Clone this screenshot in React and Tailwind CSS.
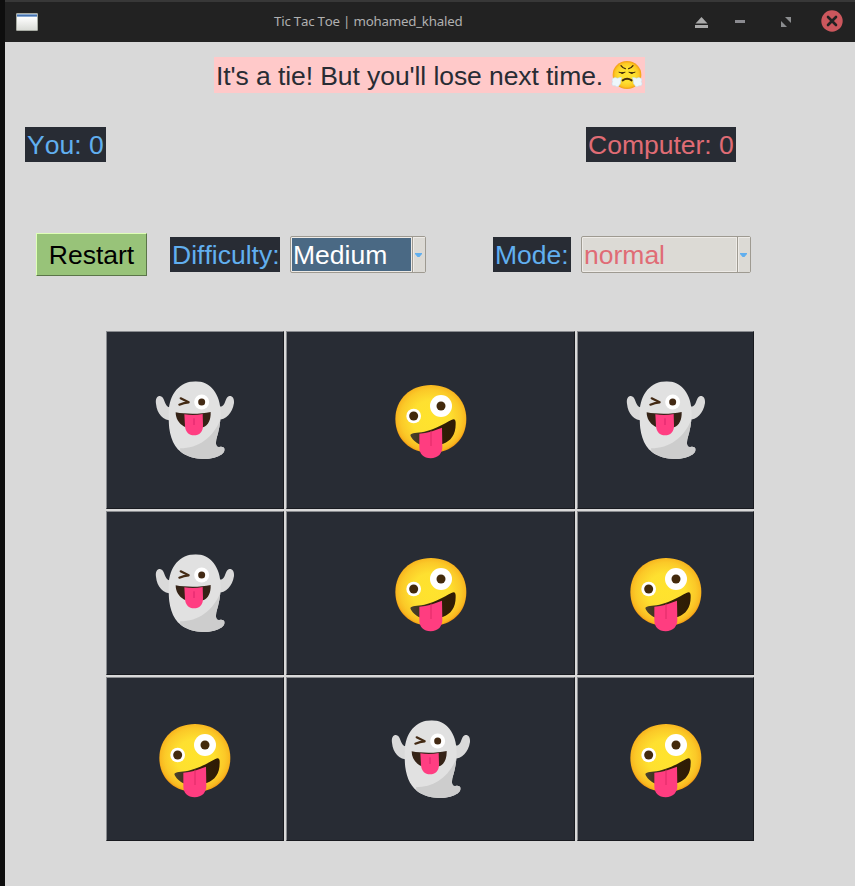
import React from "react";

function Ghost() {
  return (
    <svg width="100" height="100" viewBox="0 0 300 300" className="block shrink-0" role="img" aria-label="ghost">
      <defs>
        <clipPath id="ghostBody">
          <path d="M152 34 C104 34 73 72 71 126 C69 180 78 222 108 246 C135 267 175 271 207 263 C226 258 238 249 239 239 C239 231 231 229 223 231 C212 232 212 222 214 208 C222 182 227 158 227 130 C227 72 196 34 152 34 Z" />
        </clipPath>
      </defs>
      <path d="M82 152 C54 151 36 132 33 101 C31 86 36 78 45 78 C56 80 57 92 62 102 C66 112 74 114 84 108 Z" fill="#dadada" />
      <path d="M218 150 C243 149 262 130 267 99 C268 85 262 77 253 78 C243 81 242 95 237 103 C232 111 226 111 216 108 Z" fill="#dadada" />
      <g clipPath="url(#ghostBody)">
        <rect x="60" y="25" width="200" height="250" fill="#e1e1e1" />
        <path d="M105 235 C160 234 205 205 230 140 L255 280 L110 280 Z" fill="#cdcdcd" />
      </g>
      <path d="M92 127 C124 133 166 133 197 126 C198 148 190 167 174 172 L118 170 C101 161 92 145 92 127 Z" fill="#352317" />
      <path d="M118 133 C137 136 155 136 173 132 L174 164 C175 186 163 196 147 196 C132 196 121 186 120 168 Z" fill="#ff3e82" />
      <path d="M147 145 V165" stroke="#db236a" strokeWidth="3" />
      <circle cx="170" cy="96" r="22.5" fill="#fff" />
      <circle cx="170" cy="96" r="10.5" fill="#432a14" />
      <path d="M107 85 L131 97 Q117 98 103 104" fill="none" stroke="#432a14" strokeWidth="6.5" strokeLinecap="round" strokeLinejoin="round" />
    </svg>
  );
}

function Zany() {
  return (
    <svg width="100" height="100" viewBox="2 0 300 300" className="block shrink-0" role="img" aria-label="zany face">
      <defs>
        <radialGradient id="zanyFace" cx="50%" cy="49%" r="53%">
          <stop offset="0" stopColor="#ffe32d" />
          <stop offset="0.5" stopColor="#fee030" />
          <stop offset="0.8" stopColor="#fbc928" />
          <stop offset="0.92" stopColor="#f8b820" />
          <stop offset="1" stopColor="#f08a0b" />
        </radialGradient>
        <linearGradient id="zanyMouth" x1="0" x2="1">
          <stop offset="0" stopColor="#4a422f" />
          <stop offset="0.5" stopColor="#302107" />
          <stop offset="1" stopColor="#2f1b05" />
        </linearGradient>
      </defs>
      <path d="M152 45 C213 45 258 87 258 147 C258 208 214 249 152 249 C90 249 45 208 45 147 C45 87 91 45 152 45 Z" fill="url(#zanyFace)" />
      <path d="M90 195 C94 187 109 190 132 185 C169 176 188 163 213 150 C222 145 227 148 226 162 C226 194 212 213 187 222 L121 224 C106 219 93 206 90 195 Z" fill="url(#zanyMouth)" />
      <path d="M117 191 C140 189 163 182 185 173 L186 229 C187 250 173 265 151 265 C130 265 117 252 117 232 Z" fill="#ff3d80" />
      <path d="M152 182 V228" stroke="#de2a67" strokeWidth="3" />
      <circle cx="100" cy="138" r="22" fill="#fff" />
      <circle cx="100" cy="138" r="13.5" fill="#432a0c" />
      <circle cx="182" cy="108" r="33" fill="#fff" />
      <circle cx="182" cy="108" r="13.5" fill="#432a0c" />
    </svg>
  );
}

function Triumph() {
  return (
    <svg width="32" height="30" viewBox="0 0 96 90" className="block shrink-0" role="img" aria-label="face with steam">
      <defs>
        <radialGradient id="triumphFace" cx="50%" cy="50%" r="52%">
          <stop offset="0.5" stopColor="#fee030" />
          <stop offset="0.8" stopColor="#fcc924" />
          <stop offset="1" stopColor="#f2930f" />
        </radialGradient>
      </defs>
      <ellipse cx="48" cy="45" rx="43" ry="42" fill="url(#triumphFace)" />
      <g fill="none" stroke="#422b0d" strokeWidth="4" strokeLinecap="round">
        <path d="M30 17 Q36 25 43 26 M66 17 Q60 25 53 26" />
        <path d="M24 37 Q31 41 42 37 M54 37 Q65 41 72 37" strokeWidth="3" />
        <path d="M35 61 Q48 52 62 61" strokeWidth="6" />
      </g>
      <path d="M27 37 H41 Q34 47 27 37 M55 37 H69 Q62 47 55 37" fill="#422b0d" />
      <g fill="#edf7fc" stroke="#bddced" strokeWidth="1.5">
        <path d="M32 53 C25 51 20 57 15 53 C5 51 1 61 5 65 C0 71 4 80 12 77 C18 82 24 80 25 75 C31 72 27 63 32 53 Z" />
        <path d="M64 53 C71 51 76 57 81 53 C91 51 95 61 91 65 C96 71 92 80 84 77 C78 82 72 80 71 75 C65 72 69 63 64 53 Z" />
      </g>
    </svg>
  );
}

function Label({ width, color, children }) {
  return (
    <div className={`h-[35px] shrink-0 bg-[#282c34] px-[2px] text-[26.5px] leading-[36px] whitespace-nowrap ${width} ${color}`}>
      {children}
    </div>
  );
}

function Combo({ value, width, fieldStyle }) {
  return (
    <div className={`flex h-[37px] shrink-0 rounded-[2px] border border-[#9e9a91] bg-[#eeebe7] ${width}`}>
      <div className={`m-px mr-0 flex-1 pl-px text-[26.5px] leading-[35px] ${fieldStyle}`}>{value}</div>
      <div className="ml-px flex w-[13px] items-center justify-center border-l border-[#9e9a91] bg-[#dcdad5] pr-px shadow-[inset_1px_1px_0_#eeebe7]">
        <svg width="7" height="4" viewBox="0 0 7 4" className="block shrink-0">
          <path d="M0 0 H7 V1 L4.5 4 H2.5 L0 1 Z" fill="#61afef" />
        </svg>
      </div>
    </div>
  );
}

const board = ["ghost", "zany", "ghost", "ghost", "zany", "zany", "zany", "ghost", "zany"];

function TitleBar() {
  return (
    <header className="flex h-[42px] items-center border-t-2 border-[#383838] bg-[#222222]">
      <svg width="22" height="18" viewBox="0 0 22 18" className="ml-[11px] block shrink-0">
        <defs>
          <linearGradient id="windowIcon" x1="0" y1="0" x2="0" y2="1">
            <stop offset="0.2" stopColor="#fff" />
            <stop offset="1" stopColor="#d8dad5" />
          </linearGradient>
        </defs>
        <rect x="0.5" y="0.5" width="21" height="17" rx="0.5" fill="url(#windowIcon)" stroke="#a7aba3" />
        <path d="M1 1H21V4H1Z" fill="#86a8d2" />
        <path d="M1 2.5H21" stroke="#4671ad" />
      </svg>
      <div className="-mt-[3px] ml-[236px] w-[190px] font-['Noto_Sans'] text-[13.3px] leading-5 tracking-[-0.22px] whitespace-nowrap text-[#b0b0b0]">
        Tic Tac Toe | mohamed_khaled
      </div>
      <svg width="13" height="11" viewBox="0 0 13 11" className="ml-[231px] block shrink-0" fill="#aaaaaa">
        <path d="M6.5 0L12.5 6.5H.5Z" />
        <path d="M0 8H13V11H0Z" />
      </svg>
      <div className="-mt-[2px] ml-[27px] h-[3px] w-[10px] shrink-0 bg-[#8b8b90]" />
      <svg width="10" height="10" viewBox="0 0 10 10" className="-mt-px ml-[36px] block shrink-0" fill="#8b8d8f">
        <path d="M4 0H10V6Z" />
        <path d="M0 4V10H6Z" />
      </svg>
      <svg width="22" height="22" viewBox="0 0 22 22" className="-mt-[2px] ml-[30px] block shrink-0">
        <circle cx="11" cy="11" r="10.7" fill="#cc575d" />
        <path d="M7 7L15 15M15 7L7 15" stroke="#222" strokeWidth="2.6" strokeLinecap="round" />
      </svg>
    </header>
  );
}

export default function App() {
  return (
    <div className="flex h-[886px] w-[855px] overflow-hidden bg-[#101010] font-['Liberation_Sans',Arial,sans-serif] [font-kerning:none]">
      <div className="w-[5px] shrink-0 bg-[#0e0e0e]" />
      <div className="w-[850px] bg-[#d9d9d9]">
        <TitleBar />
        <div className="flex h-[85px] pt-[15px] pl-[209px]">
          <div className="flex h-[36px] w-[431px] items-center bg-[#ffc9c9] pl-[2px] text-[26.5px] leading-[36px] whitespace-nowrap text-[#282c34]">
            <span className="mr-auto pt-[2px] tracking-[-0.08px]">It's a tie! But you'll lose next time.</span>
            <div className="mr-[2px]"><Triumph /></div>
          </div>
        </div>
        <div className="flex h-[107px] pl-5">
          <Label width="w-[81px]" color="text-[#61afef]">You: 0</Label>
          <div className="w-[480px]" />
          <Label width="w-[150px]" color="text-[#e06c75]">Computer: 0</Label>
        </div>
        <div className="flex h-[97px] pl-[31px] pt-[2px]">
          <button className="-mt-[3px] h-[43px] w-[111px] border border-t-[#dfffb7] border-r-[#5b7549] border-b-[#5b7549] border-l-[#dfffb7] bg-[#98c379] pt-px text-[26.5px] leading-[41px] text-black">
            Restart
          </button>
          <div className="ml-[23px] flex pt-px">
            <Label width="w-[110px]" color="text-[#61afef]">Difficulty:</Label>
          </div>
          <div className="ml-[10px]">
            <Combo value="Medium" width="w-[136px]" fieldStyle="bg-[#4a6984] text-white" />
          </div>
          <div className="ml-[67px] pt-px">
            <Label width="w-[78px]" color="text-[#61afef]">Mode:</Label>
          </div>
          <div className="ml-[10px]">
            <Combo value="normal" width="w-[170px]" fieldStyle="bg-[#dcdad5] text-[#e06c75]" />
          </div>
        </div>
        <main className="ml-[101px] grid w-[648px] grid-cols-[178px_289px_177px] grid-rows-[178px_164px_164px] gap-[2px]">
          {board.map((piece, i) => (
            <div key={i} className="flex items-center justify-center border border-t-[#898b8f] border-r-[#181a1f] border-b-[#181a1f] border-l-[#898b8f] bg-[#282c34]">
              {piece === "ghost" ? <Ghost /> : <Zany />}
            </div>
          ))}
        </main>
      </div>
    </div>
  );
}
